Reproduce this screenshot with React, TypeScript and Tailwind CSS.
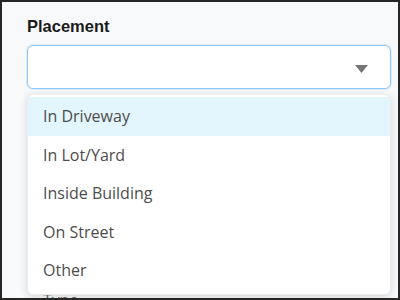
import React from "react"

const options = ["In Driveway", "In Lot/Yard", "Inside Building", "On Street", "Other"]

export default function App() {
  const active = 0
  return (
    <div className="w-[400px] h-[300px] overflow-hidden border-2 border-[#262626] bg-[#f8f9fa] font-['Liberation_Sans',sans-serif]">
      <div className="relative pl-[25px] pr-[7px] pt-[14px]">
        <label className="block text-[16.5px] font-bold leading-[20px] text-[#1b1b1b]">Placement</label>

        {/* select box */}
        <div className="mt-[9px] h-[44px] rounded-[6px] border border-[#8ec8f6] bg-white shadow-[0_0_0_1px_rgba(142,200,246,0.25)] flex items-center justify-end pr-[22px] pt-[3px]">
          <svg width="13" height="8" viewBox="0 0 13 8">
            <path d="M0 0 L13 0 L6.5 8 Z" fill="#767676" />
          </svg>
        </div>

        {/* form content behind the menu */}
        <div className="mt-[53px] ml-[14px] h-[141px] border-y border-[#dcdcdc]"></div>
        <div className="pl-[16px] mt-[7px] text-[16px] leading-[20px] text-[#666] font-['Open_Sans',sans-serif]">Type</div>

        {/* dropdown menu */}
        <div className="absolute left-[25px] right-[7px] top-[92px] rounded-[6px] bg-white pt-[2px] pb-[4px] shadow-[0_2px_8px_rgba(0,0,0,0.14)] border border-[#ececec] overflow-hidden">
          {options.map((o, i) => (
            <div
              key={o}
              className={
                "h-[38.5px] flex items-center pl-[15px] text-[16px] text-[#4d4d4d] font-['Open_Sans',sans-serif] " +
                (i === active ? "bg-[#e3f5fd]" : "bg-white")
              }
            >
              {o}
            </div>
          ))}
        </div>
      </div>
    </div>
  )
}
